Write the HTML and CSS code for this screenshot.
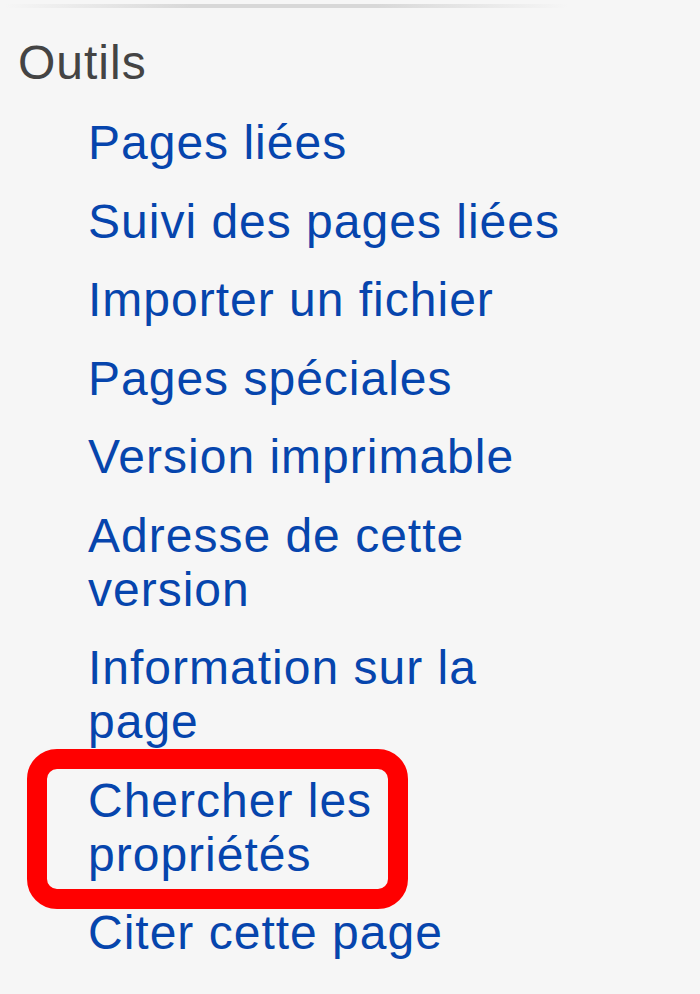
FILE: index.html
```html
<!DOCTYPE html>
<html lang="fr">
<head>
    <meta charset="UTF-8">
    <meta name="viewport" content="width=device-width, initial-scale=1.0">
    <title>Outils</title>
    <link rel="stylesheet" href="styles.css">
</head>
<body>

    <nav class="portal" id="p-tb">
        <h3 class="portal-heading">Outils</h3>
        <ul class="portal-body">
            <li><a href="#">Pages liées</a></li>
            <li><a href="#">Suivi des pages liées</a></li>
            <li><a href="#">Importer un fichier</a></li>
            <li><a href="#">Pages spéciales</a></li>
            <li><a href="#">Version imprimable</a></li>
            <li><a href="#">Adresse de cette version</a></li>
            <li><a href="#">Information sur la page</a></li>
            <li class="marked"><a href="#">Chercher les propriétés</a></li>
            <li><a href="#">Citer cette page</a></li>
        </ul>
    </nav>

</body>
</html>
```

FILE: styles.css
```css
body {
    font-family: 'Liberation Sans', Arial, sans-serif;
    margin: 0;
    padding: 0;
    background-color: #f6f6f6;
    color: #444;
}

.portal {
    width: 563px;
    margin: 4px 0 0 5px;
    background-image: linear-gradient(to right, rgba(216, 216, 216, 0) 0, #d8d8d8 33%, #d8d8d8 66%, rgba(216, 216, 216, 0) 100%);
    background-size: 100% 4px;
    background-repeat: no-repeat;
    overflow: hidden;
}

.portal-heading {
    font-size: 48px;
    font-weight: normal;
    line-height: 54px;
    letter-spacing: 1px;
    color: #444;
    margin: 32px 0 0 13px;
}

.portal-body {
    list-style: none;
    margin: 14px 0 40px 83px;
    padding: 0;
    width: 482px;
}

.portal-body li {
    font-size: 48px;
    line-height: 54px;
    letter-spacing: 1px;
    padding: 12.25px 0;
}

.portal-body a {
    color: #0645ad;
    text-decoration: none;
}

.portal-body a:hover {
    text-decoration: underline;
}

/* red annotation around one entry */
.portal-body li.marked {
    position: relative;
}

.portal-body li.marked::after {
    content: "";
    position: absolute;
    top: -13px;
    bottom: -15px;
    left: -61px;
    right: 162px;
    border: 20px solid #ff0000;
    border-radius: 30px;
    pointer-events: none;
}
```
